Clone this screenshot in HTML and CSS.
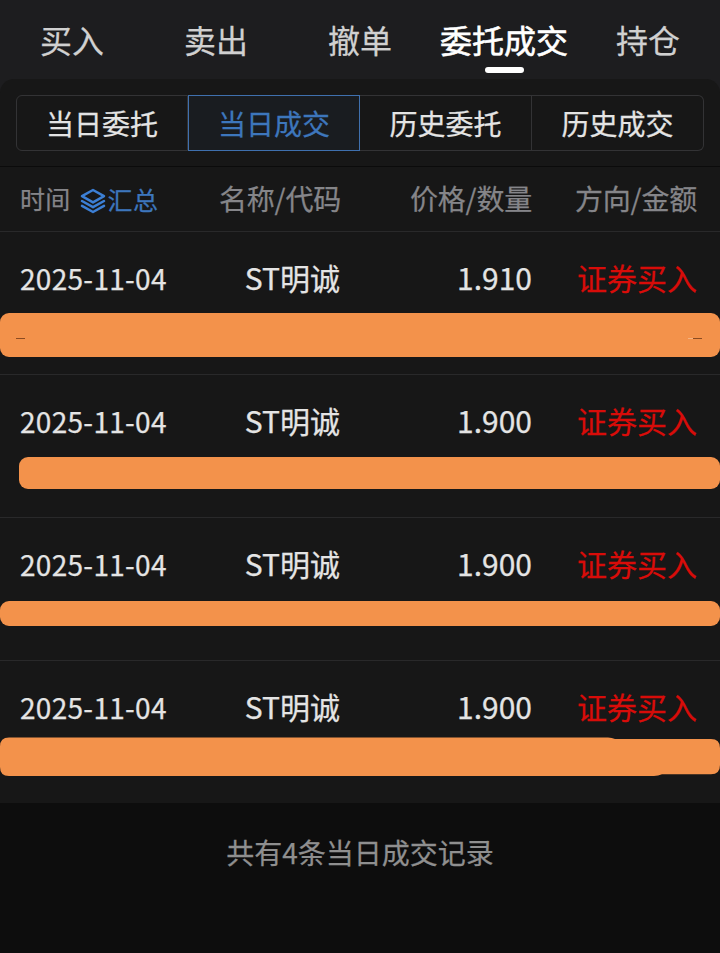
FILE: index.html
```html
<!DOCTYPE html>
<html lang="zh-CN">
<head>
  <meta charset="UTF-8" />
  <meta name="viewport" content="width=device-width, initial-scale=1.0"/>
  <title>委托成交</title>
  <link rel="stylesheet" href="styles.css">
</head>
<body>
  <nav class="tabs">
    <a class="tab">买入</a>
    <a class="tab">卖出</a>
    <a class="tab">撤单</a>
    <a class="tab active">委托成交</a>
    <a class="tab">持仓</a>
  </nav>

  <main class="panel">
    <div class="segments">
      <button class="segment">当日委托</button>
      <button class="segment active">当日成交</button>
      <button class="segment">历史委托</button>
      <button class="segment">历史成交</button>
    </div>

    <div class="list-head">
      <div class="head-time">
        <span>时间</span>
        <span class="summary">
          <svg class="layers" width="26" height="26" viewBox="0 0 26 26" fill="none" stroke="currentColor" stroke-width="2.5" stroke-linejoin="round" stroke-linecap="round">
            <path d="M13 2 L24 8.2 L13 14.4 L2 8.2 Z"/>
            <path d="M2 13 L13 19.2 L24 13"/>
            <path d="M2 17.8 L13 24 L24 17.8"/>
          </svg>汇总</span>
      </div>
      <div>名称/代码</div>
      <div>价格/数量</div>
      <div>方向/金额</div>
    </div>

    <div class="row">
      <div class="record">
        <div class="date">2025-11-04</div>
        <div class="name">ST明诚</div>
        <div>1.910</div>
        <div class="buy">证券买入</div>
      </div>
      <div class="mask mask-tall">
        <i class="tick"></i>
        <i class="tick tick-right"></i>
      </div>
    </div>

    <div class="row">
      <div class="record">
        <div class="date">2025-11-04</div>
        <div class="name">ST明诚</div>
        <div>1.900</div>
        <div class="buy">证券买入</div>
      </div>
      <div class="mask mask-inset"></div>
    </div>

    <div class="row">
      <div class="record">
        <div class="date">2025-11-04</div>
        <div class="name">ST明诚</div>
        <div>1.900</div>
        <div class="buy">证券买入</div>
      </div>
      <div class="mask mask-thin"></div>
    </div>

    <div class="row">
      <div class="record">
        <div class="date">2025-11-04</div>
        <div class="name">ST明诚</div>
        <div>1.900</div>
        <div class="buy">证券买入</div>
      </div>
      <svg class="mask-double" width="720" height="39" viewBox="0 0 720 39">
        <path d="M9 0.4 H608 Q612 0.4 615 2 H711 Q720 2 720 11 V28 Q720 37.3 711 37.3 H662 Q658 39 654 39 H9 Q0 39 0 30 V9.4 Q0 0.4 9 0.4 Z"/>
      </svg>
    </div>
  </main>

  <footer class="total">共有4条当日成交记录</footer>
</body>
</html>
```
FILE: styles.css
```css
* {
  box-sizing: border-box;
}

body {
  margin: 0;
  background: #0d0d0d;
  color: #e4e4e4;
  font-family: "Noto Sans CJK SC", "Noto Sans", sans-serif;
  -webkit-text-stroke: 0.25px currentColor;
  height: 953px;
  overflow: hidden;
}

.tabs {
  display: grid;
  grid-template-columns: repeat(5, 1fr);
  height: 99px;
  background: #1d1d1f;
}

.tab {
  display: flex;
  flex-direction: column;
  align-items: center;
  padding-top: 15px;
  height: 79px;
  font-size: 32px;
  line-height: 48px;
  color: #d0d0d0;
}

.tab.active {
  color: #fff;
  -webkit-text-stroke-width: 0.6px;
}

.tab.active::after {
  content: "";
  width: 39px;
  height: 6px;
  margin-top: 4px;
  border-radius: 3px;
  background: #fff;
}

.panel {
  margin-top: -20px;
  padding-top: 16px;
  border-radius: 14px 14px 0 0;
  background: #171717;
}

.segments {
  display: grid;
  grid-template-columns: repeat(4, 1fr);
  height: 56px;
  margin: 0 16px 15px;
}

.segment {
  padding: 0;
  border: 1px solid #333335;
  border-left-width: 0;
  background: transparent;
  color: #e4e4e4;
  font-family: inherit;
  font-size: 28px;
  line-height: 50px;
  -webkit-text-stroke: 0.25px currentColor;
}

.segment:first-child {
  border-left-width: 1px;
  border-radius: 6px 0 0 6px;
}

.segment:last-child {
  border-radius: 0 6px 6px 0;
}

.segment.active {
  border: 1px solid #3f70ae;
  background: #191c20;
  color: #3d76bc;
}

.list-head,
.record {
  display: grid;
  grid-template-columns: 150px 171px 191px 165px;
  padding: 0 23px 0 20px;
  text-align: right;
  white-space: nowrap;
}

.list-head {
  height: 66px;
  border-top: 1px solid #0b0b0b;
  border-bottom: 1px solid #29292a;
  font-size: 28px;
  line-height: 63px;
  letter-spacing: -0.2px;
  color: #858589;
}

.head-time {
  display: flex;
  gap: 9px;
  font-size: 25px;
  letter-spacing: 0.3px;
}

.summary {
  display: flex;
  align-items: center;
  gap: 2px;
  color: #3d76bc;
}

.layers {
  margin-top: 3px;
  color: #3c7fd5;
}

.row {
  height: 143px;
  border-bottom: 1px solid #29292a;
}

.row:last-child {
  height: 142px;
  border-bottom: 0;
}

.record {
  height: 81px;
  padding-top: 22px;
  font-size: 30px;
  line-height: 46px;
}

.date {
  padding-top: 1px;
  font-size: 28px;
  letter-spacing: 0.3px;
  text-align: left;
}

.name {
  padding-right: 1px;
}

.buy {
  color: #d80c09;
}

.mask {
  background: #f3924b;
  border-radius: 9px;
}

.mask-tall {
  display: flex;
  justify-content: space-between;
  height: 44px;
  padding: 25px 18px 0 16px;
}

.tick {
  width: 9px;
  height: 1px;
  background: #8b4b21;
}

.tick-right {
  box-shadow: -5px 0 0 #f7b37f;
}

.mask-inset {
  height: 32px;
  margin: 1px 0 0 19px;
}

.mask-thin {
  height: 25px;
  margin-top: 2px;
}

.mask-double {
  display: block;
  margin-top: -5px;
  fill: #f3924b;
}

.total {
  padding-top: 28px;
  font-size: 28px;
  line-height: 42px;
  text-align: center;
  color: #8f8f8f;
}
```
